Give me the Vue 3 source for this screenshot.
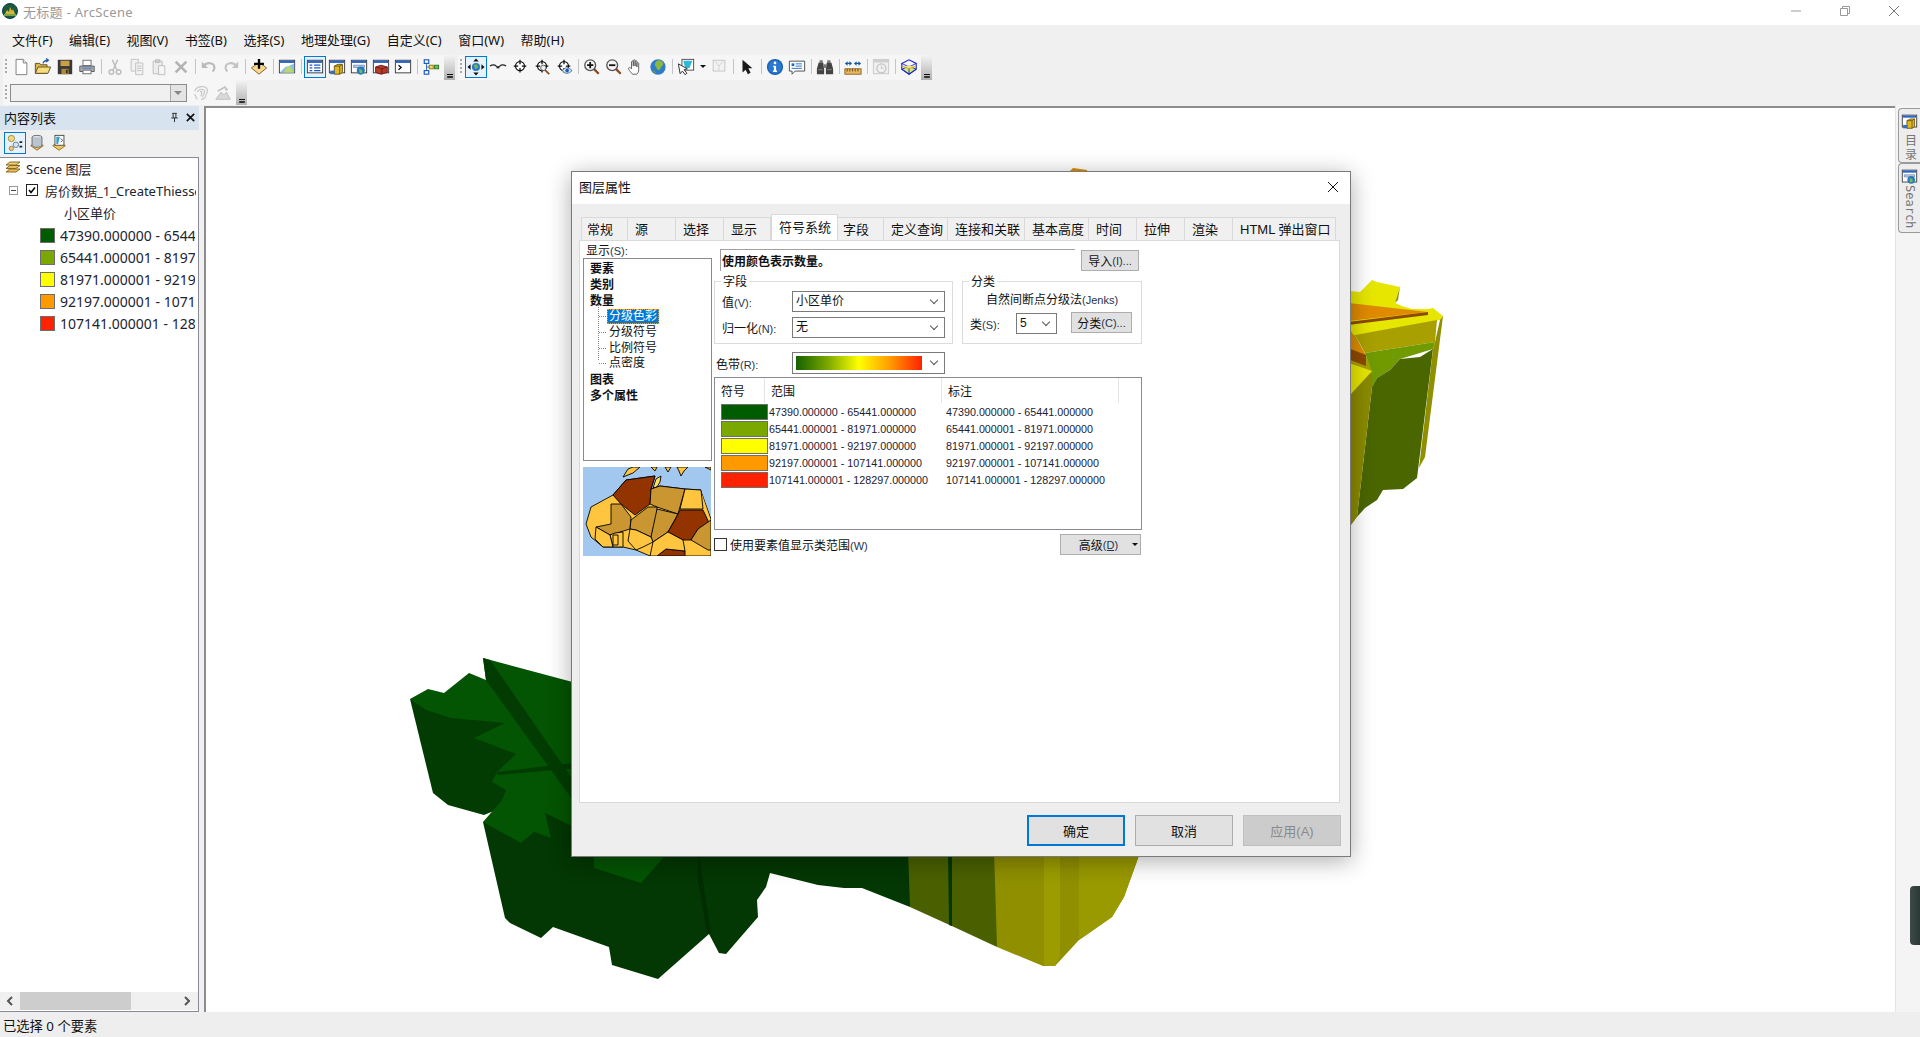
<template>
  <div class="app">
    <header class="titlebar">
      <svg class="logo" viewBox="0 0 16 16">
        <circle cx="8" cy="8" r="7.5" fill="#1d5a38" />
        <circle cx="8" cy="8" r="7.5" fill="none" stroke="#0b3a5a" />
        <path d="M3 11l2-4 2 2 1-5 2 4 1-2 2 5z" fill="#d8b83c" />
        <path d="M2 12h12" stroke="#9cc04a" stroke-width="1.500" />
      </svg>
      <span class="app-title">无标题 - ArcScene</span>
      <div class="win-btns">
        <svg viewBox="0 0 12 12"><path d="M1 6h10" stroke="#999" fill="none" /></svg>
        <svg viewBox="0 0 12 12"><path d="M1.500 3.500h7v7h-7zM3.500 3.500v-2h7v7h-2" stroke="#999" fill="none" /></svg>
        <svg viewBox="0 0 12 12"><path d="M1 1l10 10M11 1L1 11" stroke="#777" fill="none" /></svg>
      </div>
    </header>

    <nav class="menubar">
      <span v-for="m in menus" :key="m">{{ m }}</span>
    </nav>

    <div class="toolrow">
      <div class="toolbar tb-main">
        <i class="gripper"></i>
        <template v-for="(t, i) in mainTools" :key="i">
          <i v-if="t === '|'" class="sep"></i>
          <button v-else class="tool" :class="{ on: t === 'toc' }">
            <svg viewBox="0 0 20 20" v-html="icons[t]"></svg>
          </button>
        </template>
        <i class="overflow"></i>
      </div>
      <div class="toolbar tb-nav">
        <i class="gripper"></i>
        <template v-for="(t, i) in navTools" :key="i">
          <i v-if="t === '|'" class="sep"></i>
          <i v-else-if="t === 'caret'" class="caret"></i>
          <button v-else class="tool" :class="{ on: t === 'nav' }">
            <svg viewBox="0 0 20 20" v-html="icons[t]"></svg>
          </button>
        </template>
        <i class="overflow"></i>
      </div>
    </div>

    <div class="toolrow">
      <div class="toolbar tb-second">
        <i class="gripper"></i>
        <div class="layer-combo"><b></b></div>
        <button class="tool"><svg viewBox="0 0 20 20" v-html="icons.contour"></svg></button>
        <button class="tool"><svg viewBox="0 0 20 20" v-html="icons.lineSight"></svg></button>
        <i class="overflow"></i>
      </div>
    </div>

    <main class="main">
      <aside class="toc">
        <div class="toc-head">
          <span>内容列表</span>
          <svg viewBox="0 0 12 12"><path d="M3.500 1.500h5M4.500 1.500v5M7.500 1.500v5M2.500 6.500h7M6 6.500V11" stroke="#222" fill="none" /></svg>
          <svg viewBox="0 0 12 12"><path d="M2 2l8 8M10 2l-8 8" stroke="#111" stroke-width="1.800" fill="none" /></svg>
        </div>
        <div class="toc-tools">
          <button class="tool on"><svg viewBox="0 0 20 20" v-html="icons.tocDraw"></svg></button>
          <button class="tool"><svg viewBox="0 0 20 20" v-html="icons.tocSource"></svg></button>
          <button class="tool"><svg viewBox="0 0 20 20" v-html="icons.tocVisible"></svg></button>
        </div>
        <div class="toc-tree">
          <div class="tree-rows">
            <div class="tree-row scene-row">
              <svg class="layers" viewBox="0 0 16 14">
                <path d="M1 11l4-3h10l-4 3z" fill="#e8c060" stroke="#8a6a20" />
                <path d="M1 7.500l4-3h10l-4 3z" fill="#e8c060" stroke="#8a6a20" />
                <path d="M1 4l4-3h10l-4 3z" fill="#f0d080" stroke="#8a6a20" />
              </svg>
              <span>Scene 图层</span>
            </div>
            <div class="tree-row layer-row">
              <i class="expander"></i>
              <i class="check">
                <svg viewBox="0 0 10 10"><path d="M2 5l2 2.500L8 2.500" stroke="#000" stroke-width="1.500" fill="none" /></svg>
              </i>
              <span>房价数据_1_CreateThiessenPolygons</span>
            </div>
            <div class="tree-row field-row">小区单价</div>
            <div v-for="c in classes" :key="c.label" class="tree-row class-row">
              <i class="toc-swatch" :style="{ background: c.color }"></i>
              <span>{{ c.label }}</span>
            </div>
          </div>
          <div class="hscroll">
            <svg viewBox="0 0 8 10"><path d="M6 1L2 5l4 4" stroke="#555" stroke-width="2" fill="none" /></svg>
            <i class="thumb"></i>
            <svg viewBox="0 0 8 10"><path d="M2 1l4 4-4 4" stroke="#555" stroke-width="2" fill="none" /></svg>
          </div>
        </div>
      </aside>

      <section class="scene">
        <svg class="terrain" viewBox="206 108 1689 904">
          <!-- green lobe, sides first -->
          <polygon points="410,699 433,793 448,805 484,815 520,800 520,720" fill="#023c02" />
          <polygon points="483,822 505,918 510,923 541,938 553,927 609,947 612,965 658,979 709,934 719,953 726,954 758,917 757,900 766,887 770,873 818,885 844,888 862,888 910,907 920,800 560,800" fill="#033703" />
          <polygon points="908,850 910,907 954,927 997,947 997,850" fill="#4a6000" />
          <polygon points="994,850 997,947 1043,966 1055,966 1079,940 1112,917 1124,897 1141,850" fill="#8f8f00" />
          <polygon points="1044,850 1044,966 1055,966 1060,957 1060,850" fill="#9c9c00" />
          <polygon points="1079,850 1079,940 1112,917 1124,897 1141,850" fill="#999900" />
          <polygon points="948,850 949,925 952,926 952,850" fill="#033703" />
          <polygon points="698,850 711,933 707,933 698,880" fill="#022c02" />
          <polygon points="410,699 428,689 444,693 469,673 486,680 483,658 580,684 580,830 545,813 551,838 534,832 521,843 483,822 502,800 506,790 492,782 497,772 516,754 474,738 505,723 451,718 426,710" fill="#035403" />
          <polygon points="486,680 483,658 490,660 580,790 580,810" fill="#023c02" />
          <polygon points="497,772 580,762 580,768 497,775" fill="#023c02" />
          <polygon points="594,850 594,868 641,883 670,850" fill="#035403" />
          <!-- yellow end behind the dialog -->
          <polygon points="1340,290 1360,292 1372,280 1377,282 1400,287 1395,303 1402,306 1412,309 1428,309 1433,308 1443,316 1440,320 1340,338" fill="#e6e600" />
          <polygon points="1400,287 1398,300 1395,303" fill="#8f8f00" />
          <polygon points="1340,302 1428,312 1340,322" fill="#e08a00" />
          <polygon points="1340,323 1428,312 1428,315 1340,326" fill="#8c4a00" />
          <polygon points="1355,335 1437,320 1435,342 1365,353" fill="#a8a000" />
          <polygon points="1340,338 1355,335 1366,356 1376,378 1340,400" fill="#a8a000" />
          <polygon points="1365,353 1435,342 1433,349 1400,359 1390,370 1377,378 1372,387 1372,372" fill="#709a00" />
          <polygon points="1372,387 1377,378 1390,370 1400,359 1420,357 1433,349 1418,470 1417,478 1403,489 1383,490 1377,500 1365,508 1357,517" fill="#4a6600" />
          <polygon points="1440,320 1443,316 1425,457 1419,468 1433,349 1435,342" fill="#8f8f00" />
          <polygon points="1372,372 1372,387 1357,517 1340,540 1340,400" fill="#8a8a00" />
          <polygon points="1340,360 1372,371 1340,406" fill="#e6e600" />
          <polygon points="1340,329 1351,331 1366,355 1340,345" fill="#e08a00" />
          <polygon points="1340,345 1366,355 1366,366 1340,356" fill="#8c4a00" />
          <polygon points="1070,171 1073,168 1087,170 1088,175 1070,175" fill="#e08a00" />
          <polygon points="1242,175 1244,171 1247,172 1248,175" fill="#a8a000" />
        </svg>
      </section>

      <aside class="sidetabs">
        <div class="sidetab tab-catalog">
          <svg viewBox="0 0 20 20" v-html="icons.catalog"></svg>
          <span class="cjk-vert">目录</span>
        </div>
        <div class="sidetab tab-search">
          <svg viewBox="0 0 20 20" v-html="icons.search"></svg>
          <span class="mono-vert">Search</span>
        </div>
        <i class="side-handle"></i>
      </aside>
    </main>

    <footer class="status">已选择 0 个要素</footer>

    <div class="dialog">
      <div class="dlg-title">
        <span>图层属性</span>
        <svg viewBox="0 0 12 12"><path d="M1 1l10 10M11 1L1 11" stroke="#111" fill="none" /></svg>
      </div>
      <div class="dlg-body">
        <div class="tabs">
          <span v-for="t in tabs" :key="t" class="tab" :class="{ active: t === '符号系统' }">{{ t }}</span>
        </div>
        <div class="panel">
          <div class="col-left">
            <div class="show-label">显示<small>(S):</small></div>
            <div class="renderers">
              <div class="r-bold">要素</div>
              <div class="r-bold">类别</div>
              <div class="r-bold">数量</div>
              <div class="r-children">
                <div class="r-child"><span class="selected">分级色彩</span></div>
                <div class="r-child"><span>分级符号</span></div>
                <div class="r-child"><span>比例符号</span></div>
                <div class="r-child"><span>点密度</span></div>
              </div>
              <div class="r-bold">图表</div>
              <div class="r-bold">多个属性</div>
            </div>
            <svg class="preview" viewBox="0 0 128 89" preserveAspectRatio="none">
              <rect width="128" height="89" fill="#a3c8f0" />
              <g stroke="#000" stroke-width="0.900" stroke-linejoin="round">
                <!-- europe fragments along the top edge -->
                <polygon points="40,10 45,2 50,0 57,0 50,6" fill="#ffc53f" />
                <polygon points="68,0 74,0 72,4" fill="#ffc53f" />
                <polygon points="82,0 88,0 85,5" fill="#ffc53f" />
                <polygon points="94,0 105,0 101,4 98,9 96,4" fill="#ffc53f" />
                <polygon points="122,0 128,0 128,3" fill="#ffc53f" />
                <polygon points="70,21 73,12 78,9 77,15 74,20" fill="#ffe060" />
                <!-- africa -->
                <polygon points="3,57 8,40 30,28 43,13 72,9 68,22 77,19 102,22 118,23 128,52 128,89 67,89 53,83 40,80 20,80 8,70" fill="#ffc53f" />
                <polygon points="118,23 128,50 128,20" fill="#a3c8f0" stroke="none" />
                <polygon points="30,28 43,13 72,9 68,22 67,37 52,48 38,37" fill="#933300" />
                <polygon points="68,22 77,19 102,22 95,47 74,40 67,37" fill="#c99632" />
                <polygon points="102,22 118,23 120,42 97,42" fill="#ffc53f" />
                <polygon points="28,37 38,37 48,50 47,62 27,68 13,60 28,57" fill="#c99632" />
                <polygon points="48,53 65,40 74,40 74,48 68,70 53,63 47,62" fill="#c99632" />
                <polygon points="74,42 95,47 85,65 70,75 68,70" fill="#c99632" />
                <polygon points="97,43 120,43 128,60 115,62 108,73 100,73 85,65 92,53" fill="#933300" />
                <polygon points="128,53 115,62 108,73 125,83 128,83" fill="#c99632" />
                <polygon points="74,89 83,82 102,84 102,89" fill="#933300" />
                <polygon points="47,62 53,63 68,70 70,75 60,80 53,83 45,74" fill="#ffc53f" />
                <polygon points="27,68 32,66 40,65 40,80 30,80" fill="#ffc53f" />
                <polygon points="13,60 27,68 30,80 20,80 12,72" fill="#ffc53f" />
                <polygon points="30,68 35,68 35,78 30,78" fill="#ffc53f" />
                <polygon points="70,75 85,65 100,73 102,84 83,82 74,89 67,89" fill="#ffc53f" />
              </g>
            </svg>
          </div>

          <div class="col-right">
            <div class="desc-row">
              <div class="desc">使用颜色表示数量。</div>
              <button class="btn import">导入<small>(I)...</small></button>
            </div>
            <div class="groups">
              <div class="group group-field">
                <span class="legend">字段</span>
                <div class="field-line">
                  <label>值<small>(V):</small></label>
                  <div class="combo">小区单价</div>
                </div>
                <div class="field-line">
                  <label>归一化<small>(N):</small></label>
                  <div class="combo">无</div>
                </div>
              </div>
              <div class="group group-class">
                <span class="legend">分类</span>
                <div class="method">自然间断点分级法<small>(Jenks)</small></div>
                <div class="class-line">
                  <label>类<small>(S):</small></label>
                  <div class="combo combo-n">5</div>
                  <button class="btn classify">分类<small>(C)...</small></button>
                </div>
              </div>
            </div>
            <div class="field-line ramp-line">
              <label>色带<small>(R):</small></label>
              <div class="combo ramp-combo"><i class="ramp"></i></div>
            </div>
            <div class="sym-table">
              <div class="sym-head">
                <span>符号</span>
                <span>范围</span>
                <span>标注</span>
              </div>
              <div v-for="c in classes" :key="c.label" class="sym-row">
                <i class="sym-swatch" :style="{ background: c.color }"></i>
                <span>{{ c.label }}</span>
                <span>{{ c.label }}</span>
              </div>
            </div>
            <div class="below-table">
              <i class="box"></i>
              <span>使用要素值显示类范围<small>(W)</small></span>
              <button class="btn advanced">高级<small><u>(D)</u></small><i class="mini-caret"></i></button>
            </div>
          </div>
        </div>
        <div class="dlg-foot">
          <button class="btn foot default">确定</button>
          <button class="btn foot">取消</button>
          <button class="btn foot disabled">应用(A)</button>
        </div>
      </div>
    </div>
  </div>
</template>

<script setup>
const menus = [
  "文件(F)",
  "编辑(E)",
  "视图(V)",
  "书签(B)",
  "选择(S)",
  "地理处理(G)",
  "自定义(C)",
  "窗口(W)",
  "帮助(H)",
];

const mainTools = [
  "new", "open", "save", "print", "|",
  "cut", "copy", "paste", "del", "|",
  "undo", "redo", "|",
  "add", "|",
  "sceneDoc", "|",
  "toc", "catalog", "search", "toolbox", "python", "|",
  "model",
];

const navTools = [
  "nav", "fly", "target", "zoomTarget", "eyeTarget", "|",
  "zoomIn", "zoomOut", "pan", "globe", "|",
  "selectFeat", "caret", "clearSel", "|",
  "arrow", "|",
  "info", "html", "|",
  "binoc", "|",
  "measure", "|",
  "time", "|",
  "box3d",
];

const tabs = [
  "常规", "源", "选择", "显示", "符号系统", "字段", "定义查询",
  "连接和关联", "基本高度", "时间", "拉伸", "渲染", "HTML 弹出窗口",
];

const classes = [
  { label: "47390.000000 - 65441.000000", color: "#005c00" },
  { label: "65441.000001 - 81971.000000", color: "#7aa800" },
  { label: "81971.000001 - 92197.000000", color: "#ffff00" },
  { label: "92197.000001 - 107141.000000", color: "#ff9900" },
  { label: "107141.000001 - 128297.000000", color: "#ff2200" },
];

// window frame shared by the dockable window buttons
const win = (inner) =>
  `<rect x="1.5" y="2.5" width="17" height="14" fill="#fff" stroke="#333"/><rect x="2" y="3" width="16" height="2.5" fill="#2a66c8"/>${inner}`;

const cross = `<circle cx="10" cy="9" r="5" fill="#fff" stroke="#111" stroke-width="1.4"/><path d="M10 2v5M10 11v5M3 9h5M12 9h5" stroke="#111" stroke-width="1.4"/>`;

const lens = (inner) =>
  `<path d="M12 12l5.500 5.500" stroke="#8a4a20" stroke-width="2.600"/><circle cx="8" cy="8" r="6" fill="#f4f4f4" stroke="#555" stroke-width="1.500"/>${inner}`;

const chevron = `<path d="M3 13l3-2h8l3 2-7 5z" fill="#f0c860" stroke="#8a6a20"/>`;

const icons = {
  new: `<path d="M4.500 1.500h8l4 4v13h-12z" fill="#fff" stroke="#777"/><path d="M12.500 1.500v4h4" fill="#eee" stroke="#777"/>`,
  open: `<path d="M1.500 17V6h5l1 1.500h7V17z" fill="#d8b850" stroke="#5c4c18"/><path d="M1.500 17l3-7h14l-3 7z" fill="#f6dc80" stroke="#5c4c18"/><path d="M10 6c1-3 3-3.500 5-3.500M13.500 .5l2.500 2-2.500 2" fill="none" stroke="#2c5aa0" stroke-width="1.400"/>`,
  save: `<path d="M2 2h16v16H2z" fill="#383838"/><rect x="5" y="3" width="10" height="6" fill="#c9a04a"/><rect x="6" y="12" width="8" height="6" fill="#b08a3a"/><rect x="11" y="13" width="2" height="4" fill="#333"/>`,
  print: `<rect x="5.500" y="2.500" width="9" height="6" fill="#fff" stroke="#666"/><path d="M2 9h16v6H2z" fill="#b0b0b0" stroke="#555"/><rect x="5.500" y="13.500" width="9" height="4" fill="#fff" stroke="#666"/><rect x="4" y="10.500" width="12" height="1.500" fill="#5a8ac0"/>`,
  cut: `<g stroke="#bbb" stroke-width="1.600" fill="none"><path d="M7 2l5 11M13 2L8 13"/><circle cx="6" cy="15.500" r="2.500"/><circle cx="14" cy="15.500" r="2.500"/></g>`,
  copy: `<g fill="#f2f2f2" stroke="#c0c0c0"><path d="M3.500 1.500h8v13h-8z"/><path d="M8.500 5.500h8v13h-8z"/><path d="M10 9h5M10 11.500h5M10 14h5"/></g>`,
  paste: `<g fill="#ececec" stroke="#bbb"><path d="M3.500 3.500h10v14h-10z"/><path d="M6 2h5v3H6z" fill="#ccc"/><path d="M9.500 8.500h7v10h-7z" fill="#f5f5f5"/></g>`,
  del: `<path d="M4 4l12 12M16 4L4 16" stroke="#b4b4b4" stroke-width="3"/>`,
  undo: `<path d="M4 9c4-5 12-4 12 2 0 2-1 3-2 4" fill="none" stroke="#bbb" stroke-width="2.400"/><path d="M2 4v7h7z" fill="#bbb"/>`,
  redo: `<path d="M16 9c-4-5-12-4-12 2 0 2 1 3 2 4" fill="none" stroke="#c4c4c4" stroke-width="2.400"/><path d="M18 4v7h-7z" fill="#c4c4c4"/>`,
  add: `<path d="M1.500 11L10 5l8.500 6-8.500 7z" fill="#f6d890" stroke="#7a5a20"/><path d="M10 1v11M4.500 6.500h11" stroke="#000" stroke-width="2.600"/>`,
  sceneDoc: win(`<path d="M2 16l6-6 4-1 6-3v10z" fill="#8cc0e8"/><path d="M6 16l4-6 3-1 5 7z" fill="#b8d870"/>`),
  toc: win(`<path d="M4 8h3M9 8h7M4 11h3M9 11h7M4 14h3M9 14h7" stroke="#1a5ac0" stroke-width="1.400"/>`),
  catalog: win(`<path d="M7 18v-9l4-2h5v9l-3 2z" fill="#e0b820" stroke="#6a5010"/><path d="M7 9h6v9M13 9l3-2" fill="none" stroke="#6a5010"/><rect x="2.500" y="14" width="5" height="4" fill="#3a70b0"/>`),
  search: win(`<path d="M4 8h12v2.500H4z" fill="#bcd0ea" stroke="#7a90b0"/><circle cx="12" cy="14" r="4.500" fill="#2a7ac0"/><path d="M10 12l3 1 1 3-3 1z" fill="#78c050"/>`),
  toolbox: win(`<path d="M4 10l6-2 7 2v6l-7 2-6-2z" fill="#b83a2a" stroke="#6a1a10"/><path d="M4 10l7 2 6-2M11 12v6" fill="none" stroke="#6a1a10"/>`),
  python: win(`<path d="M5 8l3 2.500L5 13" fill="none" stroke="#000" stroke-width="1.300"/>`),
  model: `<path d="M5 5v11M5 10h7" stroke="#2a66c8" fill="none"/><rect x="2.500" y="2" width="5" height="4" fill="#fff" stroke="#1a5ac0" stroke-width="1.300"/><rect x="2.500" y="14" width="5" height="4" fill="#fff" stroke="#1a5ac0" stroke-width="1.300"/><rect x="8" y="8" width="4.500" height="4" fill="#f2d860" stroke="#8a7010"/><rect x="14" y="8" width="4.500" height="4" fill="#70c050" stroke="#2a7020"/>`,
  nav: `<circle cx="10" cy="10" r="4.500" fill="#2a7ac0"/><path d="M7.500 8l3-1 2 3-3 2.500z" fill="#78b850"/><path d="M10 .5l3 3.500H7zM10 19.500L7 16h6zM.5 10L4 7v6zM19.500 10L16 13V7z" fill="#111"/>`,
  fly: `<path d="M1 9c3-2 5-2 7 0 1 1 3 1 4 0 2-2 4-2 7 0" fill="none" stroke="#222" stroke-width="1.400"/><path d="M8.500 10h3v1.500h-3z" fill="#222"/>`,
  target: cross,
  zoomTarget: `${cross}<path d="M13 13l5 5" stroke="#8a4a20" stroke-width="2"/><circle cx="11.500" cy="11" r="3" fill="#eee" stroke="#555"/>`,
  eyeTarget: `${cross}<path d="M8 14c3-4 7-4 11 0-4 4-8 4-11 0z" fill="#cfe0f0" stroke="#4a6a90"/><circle cx="13.500" cy="14" r="2" fill="#1a5ac0"/>`,
  zoomIn: lens(`<path d="M8 4.500v7M4.500 8h7" stroke="#111" stroke-width="2"/>`),
  zoomOut: lens(`<path d="M4.500 8h7" stroke="#111" stroke-width="2"/>`),
  pan: `<path d="M6 18c-2-3-5-5-4-7 1-1 2 0 3 1V4.500c0-1.500 2-1.500 2 0V9V3c0-1.500 2-1.500 2 0v6V4c0-1.500 2-1.500 2 0v6V6c0-1.500 2-1 2 0v7c0 2-1 4-2 5z" fill="#fff" stroke="#555"/>`,
  globe: `<circle cx="10" cy="10" r="8.500" fill="#2f7cc8"/><path d="M9 3c3-1 5 0 7 3-1 3-3 4-4 7-2 1-4-1-4-3-2-1-2-5 1-7z" fill="#8ab840"/><path d="M4 14c2-1 3 0 4 3-2 0-3-1-4-3z" fill="#6a9a30"/>`,
  selectFeat: `<rect x="5.500" y="1.500" width="13" height="12" fill="#fff" stroke="#444"/><path d="M7 3h10l-3 8H9z" fill="#30b8d8"/><path d="M1.500 6.500l2 11 2.500-3 3 4 2-1.500-3-4 3.500-1z" fill="#fff" stroke="#222"/>`,
  clearSel: `<rect x="3.500" y="2.500" width="13" height="12" fill="#f2f2f2" stroke="#c4c4c4"/><path d="M6 4l4 5 4-5M10 9v5" fill="none" stroke="#cfcfcf"/>`,
  arrow: `<path d="M5 2v14l3.500-3 2.500 5 3-1.500-2.500-5H16z" fill="#1a1a1a"/>`,
  info: `<circle cx="10" cy="10" r="9" fill="#1a5fb4"/><circle cx="10" cy="10" r="7.500" fill="#2a78d0"/><path d="M8 8.500h3.200V14h1v1.500H7.800V14h1v-4H8z" fill="#fff"/><circle cx="10" cy="5.500" r="1.500" fill="#fff"/>`,
  html: `<path d="M1.500 3.500h17v11H8l-3.500 3.500v-3.500h-3z" fill="#fff" stroke="#444"/><rect x="4" y="6" width="3" height="3" fill="#1a6ac0"/><path d="M8.500 6.500h7M8.500 9h7M4 11.500h11.500" stroke="#1a6ac0"/>`,
  binoc: `<path d="M3 5h5l1 7v6H1v-6zM12 5h5l2 7v6h-8v-6z" fill="#444"/><rect x="4" y="2.500" width="3.500" height="3" fill="#777"/><rect x="12.500" y="2.500" width="3.500" height="3" fill="#777"/><rect x="8.500" y="7" width="3" height="4" fill="#777"/><path d="M2.500 13h5M12.500 13h5" stroke="#888"/>`,
  measure: `<rect x="1" y="12" width="18" height="6" fill="#e8b860" stroke="#8a6020"/><path d="M3.500 12v3M6.500 12v3M9.500 12v3M12.500 12v3M15.500 12v3" stroke="#6a4010"/><path d="M3 6h4M13 6h4" stroke="#1a5a9a" stroke-width="1.400"/><path d="M1 6l3-2.500v5zM9 6L6 3.500v5zM11 6l3-2.500v5zM19 6l-3-2.500v5z" fill="#1a5a9a"/>`,
  time: `<rect x="1.500" y="1.500" width="17" height="16" fill="#efefef" stroke="#c8c8c8"/><rect x="2" y="2" width="16" height="3" fill="#d0d0d0"/><circle cx="10.500" cy="11.500" r="5" fill="none" stroke="#c4c4c4" stroke-width="1.400"/><path d="M10.500 8.500v3h2.500" fill="none" stroke="#c4c4c4"/>`,
  box3d: `<path d="M10 9l8 3.500L10 18l-8-5.500z" fill="#d8e870" stroke="#1a2ac8"/><path d="M2 6l8-4 8 4v6.500L10 18l-8-5.500z" fill="none" stroke="#1a2ac8" stroke-width="1.300"/><path d="M2 6l8 4 8-4M10 10v8" fill="none" stroke="#1a2ac8"/><path d="M2 9l8 3 8-3" fill="#f2e080" stroke="#caa040"/>`,
  contour: `<g fill="none" stroke="#c8c8c8" stroke-width="1.300"><path d="M3 8c2-6 12-7 14-2 1 4-2 5-2 8 0 2-3 3-5 3"/><path d="M6 9c1-4 8-4 8-1 0 3-2 4-2 7"/><path d="M9 9c1-1 2-1 2 0 0 2-1 3-1 5"/><path d="M3 11c1 2 1 4 3 6"/></g>`,
  lineSight: `<path d="M2 17l6-8 3 3 3-3 4 8z" fill="#d8d8d8" stroke="#bbb"/><path d="M4 8l9-5" stroke="#bbb" stroke-width="1.500"/><path d="M11 2l5 4-3 2z" fill="#c4c4c4"/>`,
  tocDraw: `<circle cx="6" cy="5" r="3.500" fill="#f0d880" stroke="#a08a40"/><circle cx="11" cy="12" r="3" fill="#d8e4f0" stroke="#5a7a9a"/><circle cx="6" cy="16" r="2.500" fill="#e8c080" stroke="#a08a40"/><path d="M15 9h3M15 14h3" stroke="#222" stroke-width="2"/>`,
  tocSource: `${chevron}<ellipse cx="10" cy="3.500" rx="5.500" ry="2" fill="#dfe6ee" stroke="#666"/><path d="M4.500 3.500v9c0 3 11 3 11 0v-9" fill="#b8c4d0" stroke="#666"/>`,
  tocVisible: `${chevron}<rect x="5.500" y="1.500" width="10" height="11" fill="#fff" stroke="#444"/><path d="M7 3h4l-2 8H7z" fill="#30a0d0"/><path d="M12 5l2 2-2 2" fill="none" stroke="#444"/>`,
};
</script>

<style scoped>
.app {
  position: relative;
  display: flex;
  flex-direction: column;
  width: 1920px;
  height: 1037px;
  overflow: hidden;
  background: #f0f0f0;
  color: #111;
  font-family: "Noto Sans", "Noto Sans CJK SC", sans-serif;
  font-size: 13px;
}

button {
  font: inherit;
  color: inherit;
  padding: 0;
}

i {
  display: block;
  font-style: normal;
}

small {
  font-size: 11px;
  color: #26324a;
}

/* title bar */
.titlebar {
  display: flex;
  align-items: center;
  height: 25px;
  padding: 0 0 3px 2px;
  box-sizing: border-box;
  background: #fff;
}

.logo {
  width: 16px;
  height: 16px;
}

.app-title {
  margin-left: 5px;
  color: #9a9a9a;
  font-size: 13px;
  letter-spacing: 0.3px;
}

.win-btns {
  display: flex;
  gap: 37px;
  margin-left: auto;
  margin-right: 20px;
}

.win-btns svg {
  width: 12px;
  height: 12px;
}

/* menu */
.menubar {
  display: flex;
  align-items: center;
  gap: 16.500px;
  height: 30px;
  padding: 0 0 2px 12px;
  box-sizing: border-box;
  font-size: 13px;
}

/* toolbars */
.toolrow {
  display: flex;
  height: 25px;
}

.toolbar {
  display: flex;
  align-items: center;
  height: 25px;
  box-sizing: border-box;
  background: #f6f6f6;
}

.tb-main {
  width: 452px;
  margin-left: 3px;
  padding-bottom: 2px;
}

.tb-nav {
  width: 474px;
  margin-left: 3px;
  padding-bottom: 2px;
}

.tb-second {
  width: 244px;
  margin-left: 3px;
}

.gripper {
  flex: none;
  width: 2px;
  height: 17px;
  margin: 0 3px 0 2px;
  background-image: radial-gradient(#aaa 45%, transparent 50%);
  background-size: 2px 4px;
}

.tool {
  flex: none;
  display: flex;
  align-items: center;
  justify-content: center;
  width: 22px;
  height: 22px;
  border: 1px solid transparent;
  background: none;
  box-sizing: border-box;
}

.tool svg {
  width: 18px;
  height: 18px;
}

.tool.on {
  border: 1px solid #0078d7;
  background: #e5f1fb;
}

.sep {
  flex: none;
  width: 1px;
  height: 15px;
  margin: 0 2px 0 3px;
  background: #c4c4c4;
}

.caret {
  flex: none;
  width: 0;
  height: 0;
  margin: 0 2px 0 3px;
  border: 3px solid transparent;
  border-top: 3px solid #111;
  border-bottom: 0;
}

.overflow {
  position: relative;
  flex: none;
  align-self: flex-start;
  width: 11px;
  height: 25px;
  margin-left: auto;
  background: linear-gradient(#f4f4f4, #b0b0b0);
}

.overflow::after {
  content: "";
  position: absolute;
  left: 2.500px;
  bottom: 4px;
  width: 6px;
  height: 1px;
  border-top: 1px solid #111;
  box-shadow: 0 2px 0 -0.2px #111;
}

.layer-combo {
  position: relative;
  flex: none;
  width: 177px;
  height: 18px;
  margin-right: 3px;
  border: 1px solid #8c8c8c;
  box-sizing: border-box;
  background: #f0f0f0;
}

.layer-combo b {
  position: absolute;
  right: 0;
  top: 0;
  width: 15px;
  height: 16px;
  border-left: 1px solid #aaa;
  background: #e4e4e4;
}

.layer-combo b::after {
  content: "";
  position: absolute;
  left: 3px;
  top: 6px;
  border: 4px solid transparent;
  border-top: 4px solid #888;
}

/* main row */
.main {
  flex: 1;
  display: flex;
  min-height: 0;
}

.toc {
  flex: none;
  display: flex;
  flex-direction: column;
  width: 199px;
  margin-top: 1px;
  margin-right: 5px;
}

.toc-head {
  flex: none;
  display: flex;
  align-items: center;
  gap: 5px;
  height: 24px;
  padding: 0 3px 2px 4px;
  box-sizing: border-box;
  background: #d7e3ee;
  font-size: 13px;
}

.toc-head span {
  margin-right: auto;
}

.toc-head svg {
  width: 11px;
  height: 11px;
}

.toc-tools {
  flex: none;
  display: flex;
  align-items: center;
  height: 27px;
  padding: 0 0 2px 4px;
  box-sizing: border-box;
}

.toc-tree {
  flex: 1;
  display: flex;
  flex-direction: column;
  min-height: 0;
  border: 1px solid #8a8a96;
  border-left: 0;
  background: #fff;
}

.tree-rows {
  flex: 1;
  min-height: 0;
  overflow: hidden;
  padding-right: 2px;
}

.tree-row {
  display: flex;
  align-items: center;
  height: 22px;
  white-space: nowrap;
  overflow: hidden;
  font-size: 13px;
  color: #1c2430;
}

.scene-row {
  margin-top: -1px;
}

.field-row {
  padding-left: 64px;
  margin-bottom: 1px;
}

.layers {
  flex: none;
  width: 16px;
  height: 16px;
  margin-left: 5px;
  margin-right: 5px;
}

.layer-row {
  padding-left: 9px;
}

.class-row {
  padding-left: 40px;
  margin-right: 1px;
  gap: 5px;
  font-size: 14px;
}

.expander {
  position: relative;
  flex: none;
  width: 9px;
  height: 9px;
  border: 1px solid #999;
  box-sizing: border-box;
  margin-right: 8px;
}

.expander::after {
  content: "";
  position: absolute;
  left: 1px;
  top: 3px;
  width: 5px;
  height: 1px;
  background: #444;
}

.check {
  flex: none;
  width: 12px;
  height: 12px;
  border: 1px solid #222;
  box-sizing: border-box;
  margin-right: 7px;
}

.check svg {
  display: block;
  width: 10px;
  height: 10px;
}

.toc-swatch {
  flex: none;
  width: 15px;
  height: 15px;
  border: 1px solid #6e6e6e;
  box-sizing: border-box;
}

.hscroll {
  flex: none;
  display: flex;
  align-items: center;
  height: 18px;
  margin-bottom: 1px;
  background: #f0f0f0;
}

.hscroll svg {
  flex: none;
  width: 8px;
  height: 10px;
  margin: 0 6px;
}

.hscroll svg:last-child {
  margin-right: 7px;
}

.hscroll .thumb {
  width: 111px;
  height: 18px;
  margin-right: auto;
  background: #cdcdcd;
}

/* 3d scene */
.scene {
  position: relative;
  flex: 1;
  margin-top: 1px;
  border-top: 2px solid #8c8c8c;
  border-left: 2px solid #8c8c8c;
  background: #fff;
  overflow: hidden;
}

.terrain {
  position: absolute;
  left: 0;
  top: 0;
  width: 1689px;
  height: 904px;
}

.sidetabs {
  position: relative;
  flex: none;
  display: flex;
  flex-direction: column;
  width: 25px;
  padding: 3px 0 0 2px;
  box-sizing: border-box;
  border-left: 1px solid #e4e4e4;
  background: #f4f4f4;
}

.sidetab {
  display: flex;
  flex-direction: column;
  align-items: center;
  width: 22px;
  box-sizing: border-box;
  border: 1px solid #9a9a9a;
  border-right: 0;
  border-radius: 4px 0 0 4px;
  background: #ededed;
  padding-top: 4px;
}

.sidetab svg {
  flex: none;
  width: 17px;
  height: 17px;
}

.tab-catalog {
  height: 55px;
}

.tab-search {
  height: 70px;
}

.cjk-vert {
  writing-mode: vertical-rl;
  font-size: 12px;
  line-height: 16px;
  letter-spacing: 2px;
  color: #777;
  margin-top: 4px;
}

.mono-vert {
  writing-mode: vertical-rl;
  font-family: "DejaVu Sans Mono", monospace;
  font-size: 12px;
  line-height: 16px;
  color: #777;
}

.side-handle {
  position: absolute;
  right: 0;
  top: 781px;
  width: 10px;
  height: 59px;
  border-radius: 4px 0 0 4px;
  background: linear-gradient(90deg, #3c4a48, #2c3836);
}

.status {
  flex: none;
  display: flex;
  align-items: center;
  height: 25px;
  padding: 1px 0 0 3px;
  box-sizing: border-box;
  font-size: 13.300px;
  background: #eee;
}

/* layer properties dialog */
.dialog {
  position: absolute;
  left: 571px;
  top: 171px;
  display: flex;
  flex-direction: column;
  width: 780px;
  height: 686px;
  box-sizing: border-box;
  border: 1px solid #7a7a7a;
  background: #eee;
  box-shadow: 0 4px 22px rgba(0, 0, 0, 0.32);
  font-family: "Liberation Sans", "Noto Sans CJK SC", sans-serif;
  font-size: 12px;
}

.dlg-title {
  flex: none;
  display: flex;
  align-items: center;
  justify-content: space-between;
  height: 32px;
  padding: 0 11px 3px 7px;
  box-sizing: border-box;
  background: #fff;
  font-size: 13px;
}

.dlg-title svg {
  width: 12px;
  height: 12px;
}

.dlg-body {
  flex: 1;
  display: flex;
  flex-direction: column;
  min-height: 0;
  padding: 13px 10px 0 7px;
}

.tabs {
  flex: none;
  display: grid;
  grid-template-columns: 47px 48px 48px 47px 67px 46px 64px 77px 64px 48px 48px 48px 103px;
  height: 23px;
  padding-left: 2px;
}

.tab {
  display: flex;
  align-items: center;
  padding: 0 0 2px 7px;
  box-sizing: border-box;
  border: 1px solid #d9d9d9;
  border-left: 0;
  border-bottom: 0;
  background: #f0f0f0;
  font-size: 13px;
  white-space: nowrap;
}

.tab:first-child {
  padding-left: 5px;
  border-left: 1px solid #d9d9d9;
}

.tab:nth-child(6) {
  padding-left: 5px;
}

.tab.active {
  position: relative;
  z-index: 1;
  height: 26px;
  margin-top: -3px;
  background: #fff;
  border-left: 1px solid #d9d9d9;
}

.panel {
  flex: none;
  display: flex;
  width: 761px;
  height: 563px;
  box-sizing: border-box;
  border: 1px solid #d9d9d9;
  background: #fff;
  padding: 3px 0 0 3px;
}

.col-left {
  flex: none;
  display: flex;
  flex-direction: column;
  width: 129px;
}

.show-label {
  height: 14px;
  padding-left: 3px;
  line-height: 14px;
}

.renderers {
  height: 203px;
  box-sizing: border-box;
  padding: 2px 0 0 6px;
  border: 1px solid #8a8a8a;
  line-height: 16px;
}

.r-bold {
  font-weight: 700;
}

.r-children {
  position: relative;
  margin: -1px 0 1px 8px;
  padding-left: 9px;
}

.r-children::before {
  content: "";
  position: absolute;
  left: 0;
  top: -3px;
  height: 55px;
  border-left: 1px dotted #888;
}

.r-child {
  position: relative;
  height: 15.750px;
}

.r-child::before {
  content: "";
  position: absolute;
  left: -8px;
  top: 8px;
  width: 7px;
  border-top: 1px dotted #888;
}

.r-child span {
  display: inline-block;
  padding: 0 2px;
  height: 15px;
  line-height: 15px;
}

.r-child .selected {
  background: #0078d7;
  color: #fff;
  outline: 1px dotted #e8a030;
  outline-offset: -1px;
}

.preview {
  display: block;
  width: 128px;
  height: 89px;
  margin-top: 6px;
}

.col-right {
  flex: none;
  width: 429px;
  margin-left: 2px;
}

.desc-row {
  display: flex;
  align-items: flex-start;
  gap: 6px;
  height: 32px;
  margin-left: 6px;
  padding-top: 5px;
}

.desc {
  width: 355px;
  height: 22px;
  box-sizing: border-box;
  padding: 4px 0 0 1px;
  border-top: 1px solid #a0a0a0;
  border-left: 1px solid #a0a0a0;
  font-weight: 700;
  line-height: 16px;
}

.btn {
  display: flex;
  align-items: center;
  justify-content: center;
  box-sizing: border-box;
  border: 1px solid #adadad;
  background: #e1e1e1;
  white-space: nowrap;
  cursor: default;
}

.import {
  width: 58px;
  height: 21px;
  margin-top: 1px;
}

.groups {
  display: flex;
  gap: 9px;
}

.group {
  position: relative;
  height: 63px;
  box-sizing: border-box;
  border: 1px solid #dcdcdc;
}

.legend {
  position: absolute;
  left: 6px;
  top: -7px;
  padding: 0 2px;
  background: #fff;
  line-height: 14px;
}

.group-field {
  width: 239px;
  padding: 9px 7px 0 7px;
}

.group-class {
  width: 180px;
  padding: 11px 9px 0 7px;
}

.field-line {
  display: flex;
  align-items: center;
  height: 21px;
  margin-bottom: 4.500px;
}

.field-line label {
  flex: none;
  width: 70px;
}

.combo {
  position: relative;
  flex: none;
  width: 153px;
  height: 21px;
  box-sizing: border-box;
  padding-left: 3px;
  border: 1px solid #7a7a7a;
  line-height: 19px;
  background: #fff;
}

.combo::after {
  content: "";
  position: absolute;
  right: 7px;
  top: 5px;
  width: 5px;
  height: 5px;
  border-right: 1px solid #555;
  border-bottom: 1px solid #555;
  transform: rotate(45deg);
}

.method {
  padding-left: 16px;
  height: 14px;
  line-height: 14px;
}

.class-line {
  display: flex;
  align-items: center;
  margin-top: 6px;
}

.class-line label {
  flex: none;
  width: 46px;
}

.combo-n {
  width: 41px;
  margin-right: 14px;
}

.classify {
  width: 61px;
  height: 21px;
  margin-top: -2px;
}

.ramp-line {
  height: 22px;
  margin: 8px 0 3px 2px;
}

.ramp-line label {
  width: 76px;
}

.ramp-combo {
  height: 22px;
  padding: 3px;
}

.ramp {
  width: 126px;
  height: 14px;
  background: linear-gradient(90deg, #156000, #7aa800 25%, #ffff00 50%, #ff9900 75%, #ff2200);
}

.sym-table {
  width: 428px;
  height: 153px;
  box-sizing: border-box;
  border: 1px solid #8a8a96;
}

.sym-head {
  display: grid;
  grid-template-columns: 50px 177px 177px;
  height: 25px;
}

.sym-head span {
  display: flex;
  align-items: center;
  padding-left: 6px;
  border-right: 1px solid #e4e4e4;
}

.sym-row {
  display: grid;
  grid-template-columns: 47px 176px 177px;
  column-gap: 1px;
  align-items: center;
  height: 17px;
  padding-left: 6px;
  font-size: 10.750px;
  color: #1a2233;
  white-space: nowrap;
}

.sym-swatch {
  height: 16px;
  box-sizing: border-box;
  border: 1px solid #6e6e6e;
}

.below-table {
  display: flex;
  align-items: center;
  gap: 3px;
  height: 21px;
  margin-top: 4px;
}

.box {
  flex: none;
  width: 13px;
  height: 13px;
  box-sizing: border-box;
  border: 1px solid #333;
}

.advanced {
  position: relative;
  width: 81px;
  height: 21px;
  margin-left: auto;
  margin-right: 2px;
  padding-right: 4px;
}

.mini-caret {
  position: absolute;
  right: 2px;
  top: 8px;
  border: 3px solid transparent;
  border-top: 3px solid #111;
}

.dlg-foot {
  flex: 1;
  display: flex;
  justify-content: flex-end;
  gap: 10px;
  padding-top: 12px;
  margin-right: -1px;
}

.foot {
  width: 98px;
  height: 31px;
  font-size: 13px;
}

.foot.default {
  border: 2px solid #0078d7;
}

.foot.disabled {
  background: #ccc;
  border-color: #bfbfbf;
  color: #8a8a8a;
}
</style>

<style>
html,
body {
  margin: 0;
  overflow: hidden;
}
</style>
